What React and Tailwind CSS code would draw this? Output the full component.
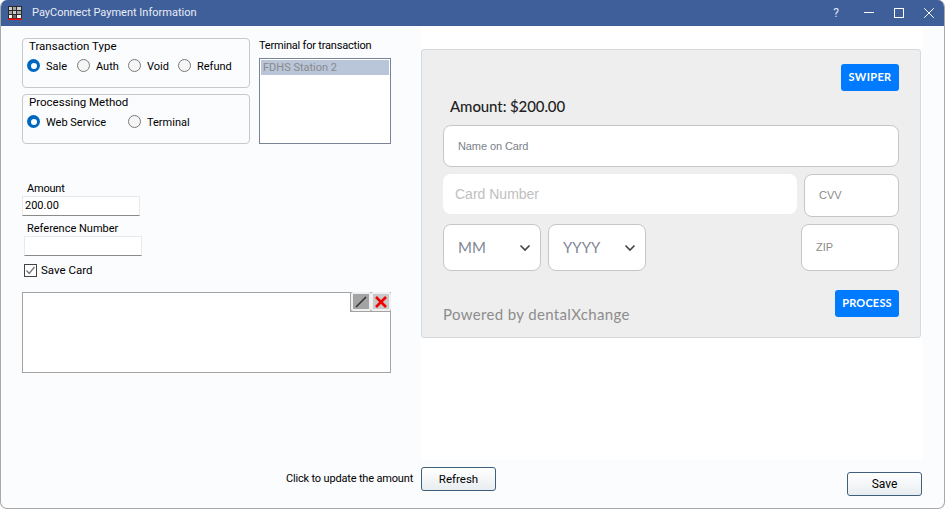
import React from "react";

const win = { fontFamily: 'Roboto, "Liberation Sans", sans-serif' };
const web = { fontFamily: 'Lato, "Open Sans", sans-serif' };
const arial = { fontFamily: '"Liberation Sans", Arial, sans-serif' };

function Radio({ label, checked, className = "" }) {
  return (
    <div className={"flex items-center gap-[6px] " + className}>
      {checked ? (
        <span className="w-[13px] h-[13px] rounded-full bg-[#0067c0] flex items-center justify-center shrink-0">
          <span className="w-[6px] h-[6px] rounded-full bg-white" />
        </span>
      ) : (
        <span className="w-[13px] h-[13px] rounded-full border border-[#7a7a7a] bg-[#f5f5f5] shrink-0" />
      )}
      <span className="text-[11px] leading-none pt-[1px] text-black">{label}</span>
    </div>
  );
}

function Group({ title, children }) {
  return (
    <div className="h-[50px] w-[228px] rounded-[4px] border border-[#c8c8c8] pl-[4px]">
      <div className="text-[11.5px] leading-[14px] pl-[2px] text-black">{title}</div>
      <div className="flex items-center mt-[6px]">{children}</div>
    </div>
  );
}

function Field({ children, className = "" }) {
  return (
    <div className={"rounded-[8px] border border-[#c6c6c6] bg-white flex items-center " + className}>
      {children}
    </div>
  );
}

function Chevron() {
  return (
    <svg width="12" height="8" viewBox="0 0 12 8" fill="none" className="absolute right-[9px] top-[19px]">
      <path d="M1.5 1.5 L6 6 L10.5 1.5" stroke="#444" strokeWidth="1.6" />
    </svg>
  );
}

export default function App() {
  return (
    <div style={win} className="w-[945px] h-[509px] bg-[#fbfcfe] border border-[#a9a9a9] border-t-0 rounded-[7px] overflow-hidden flex flex-col">
      {/* title bar */}
      <div className="h-[26px] shrink-0 bg-[#3f5f9b] flex items-center text-white">
        <svg width="14" height="14" viewBox="0 0 14 14" className="ml-[7px] shrink-0">
          <rect x="0" y="0" width="14" height="13" fill="#2a2a2a" />
          <rect x="1" y="1" width="3" height="3" fill="#cfcfcf" />
          <rect x="5" y="1" width="3" height="3" fill="#a5a5a5" />
          <rect x="9" y="1" width="4" height="3" fill="#cfcfcf" />
          <rect x="1" y="5" width="3" height="3" fill="#a5a5a5" />
          <rect x="5" y="5" width="3" height="3" fill="#cfcfcf" />
          <rect x="9" y="5" width="4" height="3" fill="#a5a5a5" />
          <rect x="1" y="9" width="3" height="3" fill="#f5f5f5" />
          <rect x="5" y="9" width="3" height="3" fill="#6f6f6f" />
          <rect x="9" y="9" width="4" height="3" fill="#f5f5f5" />
          <rect x="0" y="12.5" width="14" height="1.5" fill="#f01010" />
        </svg>
        <span className="ml-[10px] text-[11px] text-[#e8edf6]">PayConnect Payment Information</span>
        <div className="ml-auto flex items-center">
          <span className="text-[12px] text-[#dfe6f2] mr-[25px]">?</span>
          <svg width="10" height="10" viewBox="0 0 10 10" className="mr-[20px]"><path d="M0 4.5H10" stroke="#fff" strokeWidth="1" /></svg>
          <svg width="10" height="10" viewBox="0 0 10 10" className="mr-[20px]"><rect x="0.5" y="0.5" width="9" height="9" fill="none" stroke="#fff" strokeWidth="1" /></svg>
          <svg width="10" height="10" viewBox="0 0 10 10" className="mr-[10px]"><path d="M0.2 0.2L9.8 9.8M9.8 0.2L0.2 9.8" stroke="#fff" strokeWidth="1" /></svg>
        </div>
      </div>

      {/* content */}
      <div className="flex-1 flex flex-col pl-[21px] pr-[22px]">
        <div className="flex items-start h-[441px]">
          {/* left column */}
          <div className="w-[369px] shrink-0 flex flex-col">
            <div className="flex gap-[9px] mt-[12px]">
              <div className="flex flex-col gap-[6px]">
                <Group title="Transaction Type">
                  <Radio label="Sale" checked className="w-[50px]" />
                  <Radio label="Auth" className="w-[51px]" />
                  <Radio label="Void" className="w-[50px]" />
                  <Radio label="Refund" />
                </Group>
                <Group title="Processing Method">
                  <Radio label="Web Service" checked className="w-[101px]" />
                  <Radio label="Terminal" />
                </Group>
              </div>
              <div className="w-[132px] flex flex-col">
                <div className="text-[11px] leading-[14px] h-[20px] pt-[1px] text-black tracking-[-0.2px]">Terminal for transaction</div>
                <div className="h-[86px] border border-[#7a8494] bg-white p-[1px]">
                  <div className="h-[15px] bg-[#b9c5d9] text-[11px] leading-[15px] pl-[2px] text-[#8a8a8a]">FDHS Station 2</div>
                </div>
              </div>
            </div>

            <div className="text-[11px] leading-[14px] text-black mt-[38px] pl-[5px] tracking-[-0.2px]">Amount</div>
            <div className="w-[118px] h-[20px] bg-white border border-[#eaeaea] border-b-[#8a8a8a] text-[11px] leading-[18px] pl-[2px] text-black">200.00</div>
            <div className="text-[11px] leading-[14px] text-black mt-[6px] pl-[5px]">Reference Number</div>
            <div className="w-[118px] h-[20px] ml-[2px] bg-white border border-[#eaeaea] border-b-[#8a8a8a]" />
            <div className="flex items-center gap-[4px] ml-[2px] mt-[8px]">
              <span className="w-[13px] h-[13px] border border-[#444] bg-white flex items-center justify-center">
                <svg width="11" height="11" viewBox="0 0 11 11" fill="none"><path d="M1.5 5.5L4.2 8.5L9.5 2" stroke="#777" strokeWidth="1.3" /></svg>
              </span>
              <span className="text-[11.5px] leading-none pt-[1px] text-black">Save Card</span>
            </div>

            <div className="relative h-[81px] mt-[15px] bg-white border border-[#a3a3a3]">
              <div className="absolute right-[-1px] top-[-1px] flex bg-[#a3a3a3] pb-[1px] pl-[1px]">
                <span className="w-[20px] h-[19px] border-2 border-[#f0f0f0] rounded-[2px] bg-[#a3a3a3] flex items-center justify-center">
                  <svg width="12" height="12" viewBox="0 0 12 12"><path d="M1 11L11 1" stroke="#333" strokeWidth="1.6" /></svg>
                </span>
                <span className="w-[20px] h-[19px] border-2 border-[#f0f0f0] rounded-[2px] bg-[#c8c8c8] flex items-center justify-center">
                  <svg width="12" height="12" viewBox="0 0 12 12"><path d="M1 1L11 11M11 1L1 11" stroke="#f00000" strokeWidth="2.6" /></svg>
                </span>
              </div>
            </div>
          </div>

          {/* right column */}
          <div style={web} className="ml-[30px] w-[502px] h-[434px] flex flex-col bg-white pt-[23px]">
            <div className="w-[500px] h-[289px] bg-[#eeeeee] border border-[#d5d8dc] rounded-[3px] pt-[14px] pl-[21px] pr-[21px] flex flex-col">
              <div className="flex justify-end">
                <div className="w-[58px] h-[27px] bg-[#007bff] rounded-[3px] text-white text-[11px] font-bold tracking-[0.3px] flex items-center justify-center">SWIPER</div>
              </div>
              <div className="text-[15px] leading-[20px] text-[#222] font-medium pl-[7px] mt-[5px] tracking-[-0.1px]">Amount: $200.00</div>
              <Field className="h-[42px] mt-[9px] pl-[14px]">
                <span style={arial} className="text-[11px] text-[#7b7f8a] tracking-[-0.1px]">Name on Card</span>
              </Field>
              <div className="flex mt-[7px] h-[43px]">
                <div className="w-[354px] h-[40px] bg-white rounded-[8px] pl-[12px] flex items-center">
                  <span style={arial} className="text-[14px] text-[#c0c0c0]">Card Number</span>
                </div>
                <Field className="ml-[7px] w-[95px] h-[43px] pl-[14px]">
                  <span style={arial} className="text-[11px] text-[#8a8a8a]">CVV</span>
                </Field>
              </div>
              <div className="flex mt-[7px] h-[47px]">
                <Field className="relative w-[98px] pl-[14px]">
                  <span className="text-[15px] text-[#7f8796]">MM</span>
                  <Chevron />
                </Field>
                <Field className="relative ml-[7px] w-[98px] pl-[14px]">
                  <span className="text-[15px] text-[#7f8796]">YYYY</span>
                  <Chevron />
                </Field>
                <Field className="ml-auto w-[98px] pl-[14px]">
                  <span style={arial} className="text-[11px] text-[#8a8a8a]">ZIP</span>
                </Field>
              </div>
              <div className="flex items-start justify-between mt-[19px]">
                <span className="text-[15px] leading-[20px] text-[#8c8c8c] mt-[14px] tracking-[0.35px]">Powered by dentalXchange</span>
                <div className="w-[64px] h-[27px] bg-[#007bff] rounded-[3px] text-white text-[11px] font-bold tracking-[0.2px] flex items-center justify-center">PROCESS</div>
              </div>
            </div>
          </div>
        </div>

        {/* footer */}
        <div className="flex items-start">
          <div className="ml-[264px] w-[135px] h-[24px] pt-[1px] flex items-center">
            <span className="text-[11px] text-black whitespace-nowrap tracking-[-0.17px]">Click to update the amount</span>
          </div>
          <div className="w-[75px] h-[24px] pt-[1px] rounded-[3px] border border-[#3f5f7f] bg-gradient-to-b from-white to-[#e9edf0] text-[11.5px] text-black flex items-center justify-center">Refresh</div>
          <div className="ml-auto mt-[5px] w-[75px] h-[24px] rounded-[3px] border border-[#3f5f7f] bg-gradient-to-b from-white to-[#e9edf0] text-[12px] text-black flex items-center justify-center">Save</div>
        </div>
      </div>
    </div>
  );
}
